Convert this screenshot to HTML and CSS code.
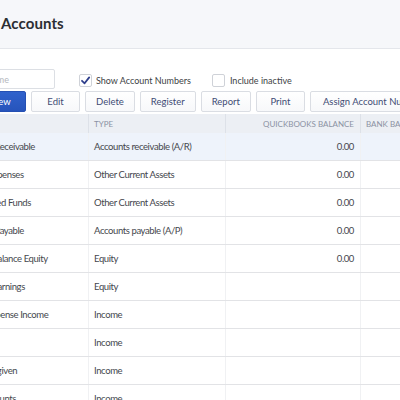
FILE: index.html
```html
<!DOCTYPE html>
<html>
<head>
<meta charset="utf-8">
<link rel="stylesheet" href="styles.css">
</head>
<body>
<header class="titlebar">
  <h1 class="title">Accounts</h1>
</header>
<main class="content">
  <div class="filters">
    <input class="search" type="text" placeholder="Filter by name">
    <label class="check">
      <span class="box checked"><svg viewBox="0 0 13 13" width="13" height="13"><polyline points="3,6.8 5.6,9.3 10.2,3.4" fill="none" stroke="#2f3f8c" stroke-width="1.8" stroke-linecap="round" stroke-linejoin="round"/></svg></span>
      <span>Show Account Numbers</span>
    </label>
    <label class="check check-inactive">
      <span class="box"></span>
      <span>Include inactive</span>
    </label>
  </div>
  <div class="actions">
    <button class="btn btn-primary">New</button>
    <button class="btn">Edit</button>
    <button class="btn">Delete</button>
    <button class="btn">Register</button>
    <button class="btn">Report</button>
    <button class="btn">Print</button>
    <button class="btn btn-wide">Assign Account Numbers</button>
  </div>
  <table class="grid">
    <thead>
      <tr>
        <th class="c-name">Name</th>
        <th class="c-type">Type</th>
        <th class="c-bal">QuickBooks Balance</th>
        <th class="c-bank">Bank Balance</th>
      </tr>
    </thead>
    <tbody>
      <tr class="selected"><td class="c-name">Accounts Receivable</td><td class="c-type">Accounts receivable (A/R)</td><td class="c-bal">0.00</td><td class="c-bank"></td></tr>
      <tr><td class="c-name">Prepaid Expenses</td><td class="c-type">Other Current Assets</td><td class="c-bal">0.00</td><td class="c-bank"></td></tr>
      <tr><td class="c-name">Undeposited Funds</td><td class="c-type">Other Current Assets</td><td class="c-bal">0.00</td><td class="c-bank"></td></tr>
      <tr><td class="c-name">Accounts Payable</td><td class="c-type">Accounts payable (A/P)</td><td class="c-bal">0.00</td><td class="c-bank"></td></tr>
      <tr><td class="c-name">Opening Balance Equity</td><td class="c-type">Equity</td><td class="c-bal">0.00</td><td class="c-bank"></td></tr>
      <tr><td class="c-name">Retained Earnings</td><td class="c-type">Equity</td><td class="c-bal"></td><td class="c-bank"></td></tr>
      <tr><td class="c-name">Billable Expense Income</td><td class="c-type">Income</td><td class="c-bal"></td><td class="c-bank"></td></tr>
      <tr><td class="c-name">Services</td><td class="c-type">Income</td><td class="c-bal"></td><td class="c-bank"></td></tr>
      <tr><td class="c-name">Discounts given</td><td class="c-type">Income</td><td class="c-bal"></td><td class="c-bank"></td></tr>
      <tr><td class="c-name">Sales Discounts</td><td class="c-type">Income</td><td class="c-bal"></td><td class="c-bank"></td></tr>
    </tbody>
  </table>
</main>
</body>
</html>
```
FILE: styles.css
```css
html, body {
  margin: 0;
  padding: 0;
  overflow: hidden;
  background: #ffffff;
  font-family: Lato, "Open Sans", sans-serif;
  color: #44464c;
}

.titlebar {
  height: 48px;
  background: #f6f7fa;
  border-bottom: 1px solid #e4e6eb;
  display: flex;
  align-items: center;
  padding-left: 1px;
}

.title {
  margin: 0 0 2px 0;
  font-size: 15px;
  font-weight: 700;
  color: #2c2e33;
  letter-spacing: 0.1px;
}

.content {
  padding-top: 20px;
}

.filters {
  display: flex;
  align-items: center;
  height: 20px;
}

.search {
  box-sizing: border-box;
  width: 111px;
  height: 20px;
  margin: 0 0 0 -56px;
  padding: 0 0 0 8px;
  border: 1px solid #dcdfe4;
  border-radius: 2px;
  font-family: inherit;
  font-size: 9px;
  color: #444;
  background: #fff;
  outline: none;
}

.search::placeholder {
  color: #b4b7bd;
}

.check {
  display: flex;
  align-items: center;
  gap: 4px;
  font-size: 9px;
  color: #3d3f45;
  margin-left: 24px;
  margin-top: 3px;
}

.check-inactive {
  margin-left: 21px;
  gap: 5px;
}

.box {
  box-sizing: border-box;
  width: 13px;
  height: 13px;
  border: 1px solid #cfd2d8;
  border-radius: 2px;
  background: #fff;
  display: flex;
  align-items: center;
  justify-content: center;
}

.box svg {
  display: block;
  flex: none;
}

.actions {
  display: flex;
  gap: 5px;
  margin-top: 2px;
  white-space: nowrap;
}

.btn {
  box-sizing: border-box;
  flex: none;
  height: 21px;
  min-width: 49px;
  padding: 0 10px;
  border: 1px solid #dadde3;
  border-radius: 2px;
  background: linear-gradient(#ffffff, #f7f8fa);
  font-family: inherit;
  font-size: 9.5px;
  color: #414b74;
}

.btn-primary {
  margin-left: -24px;
  min-width: 50px;
  background: linear-gradient(#3062cc, #2754bb);
  border-color: #2550b3;
  color: #ffffff;
}

.btn-wide {
  padding: 0 12px;
}

.grid {
  margin-top: 2px;
  margin-left: -48px;
  border-collapse: collapse;
  table-layout: fixed;
  width: 530px;
}

.grid th {
  height: 19px;
  padding: 0 5px;
  background: #eceff4;
  font-size: 8px;
  font-weight: 400;
  text-transform: uppercase;
  color: #8b92a3;
  text-align: left;
  border-left: 1px solid #dde1e8;
  white-space: nowrap;
  overflow: hidden;
}

.grid th.c-name {
  border-left: none;
}

.grid td {
  height: 27px;
  padding: 0 5px;
  font-size: 9.5px;
  letter-spacing: -0.4px;
  color: #45474d;
  border-bottom: 1px solid #e2e3e6;
  border-left: 1px solid #f0f1f3;
  white-space: nowrap;
  overflow: hidden;
}

.grid td.c-name {
  border-left: none;
}

.c-name { width: 126px; }
.c-type { width: 126px; }
.c-bal { width: 123px; text-align: right !important; padding-right: 6px !important; }
.c-bank { width: 130px; }

.grid tr.selected td {
  background: #eef3fb;
}
```
